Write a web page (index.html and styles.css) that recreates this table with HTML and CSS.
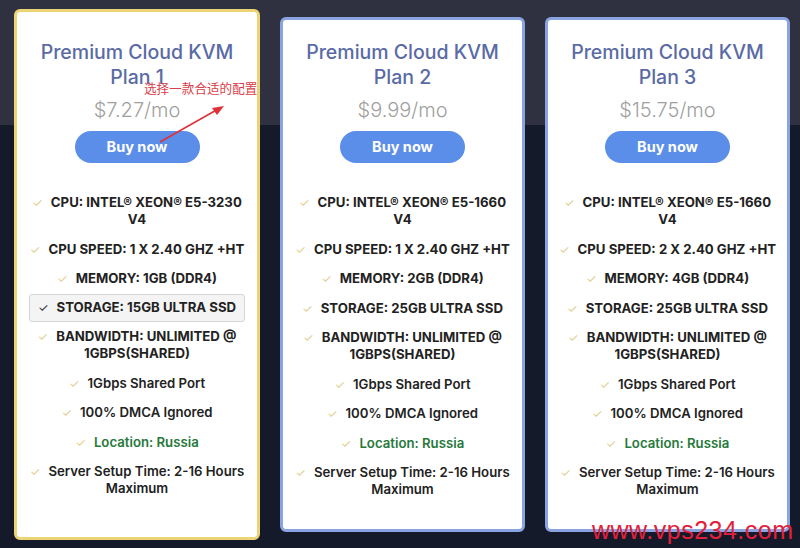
FILE: index.html
```html
<!DOCTYPE html>
<html lang="en">
<head>
<meta charset="utf-8">
<title>Premium Cloud KVM Plans</title>
<link rel="stylesheet" href="styles.css">
</head>
<body>
<main class="plans">
  <section class="card card-active">
    <h2 class="title">Premium Cloud KVM Plan 1</h2>
    <p class="price">$7.27/mo</p>
    <a class="buy" href="#">Buy now</a>
    <ul class="features">
      <li><span class="chk">✓</span>CPU: INTEL® XEON® E5-3230 V4</li>
      <li><span class="chk">✓</span>CPU SPEED: 1 X 2.40 GHZ +HT</li>
      <li><span class="chk">✓</span>MEMORY: 1GB (DDR4)</li>
      <li class="hover"><span class="chk">✓</span>STORAGE: 15GB ULTRA SSD</li>
      <li><span class="chk">✓</span>BANDWIDTH: UNLIMITED @ 1GBPS(SHARED)</li>
      <li class="plain"><span class="chk">✓</span>1Gbps Shared Port</li>
      <li class="plain"><span class="chk">✓</span>100% DMCA Ignored</li>
      <li class="plain loc"><span class="chk">✓</span>Location: Russia</li>
      <li class="plain"><span class="chk">✓</span>Server Setup Time: 2-16 Hours Maximum</li>
    </ul>
  </section>
  <section class="card">
    <h2 class="title">Premium Cloud KVM Plan 2</h2>
    <p class="price">$9.99/mo</p>
    <a class="buy" href="#">Buy now</a>
    <ul class="features">
      <li><span class="chk">✓</span>CPU: INTEL® XEON® E5-1660 V4</li>
      <li><span class="chk">✓</span>CPU SPEED: 1 X 2.40 GHZ +HT</li>
      <li><span class="chk">✓</span>MEMORY: 2GB (DDR4)</li>
      <li><span class="chk">✓</span>STORAGE: 25GB ULTRA SSD</li>
      <li><span class="chk">✓</span>BANDWIDTH: UNLIMITED @ 1GBPS(SHARED)</li>
      <li class="plain"><span class="chk">✓</span>1Gbps Shared Port</li>
      <li class="plain"><span class="chk">✓</span>100% DMCA Ignored</li>
      <li class="plain loc"><span class="chk">✓</span>Location: Russia</li>
      <li class="plain"><span class="chk">✓</span>Server Setup Time: 2-16 Hours Maximum</li>
    </ul>
  </section>
  <section class="card">
    <h2 class="title">Premium Cloud KVM Plan 3</h2>
    <p class="price">$15.75/mo</p>
    <a class="buy" href="#">Buy now</a>
    <ul class="features">
      <li><span class="chk">✓</span>CPU: INTEL® XEON® E5-1660 V4</li>
      <li><span class="chk">✓</span>CPU SPEED: 2 X 2.40 GHZ +HT</li>
      <li><span class="chk">✓</span>MEMORY: 4GB (DDR4)</li>
      <li><span class="chk">✓</span>STORAGE: 25GB ULTRA SSD</li>
      <li><span class="chk">✓</span>BANDWIDTH: UNLIMITED @ 1GBPS(SHARED)</li>
      <li class="plain"><span class="chk">✓</span>1Gbps Shared Port</li>
      <li class="plain"><span class="chk">✓</span>100% DMCA Ignored</li>
      <li class="plain loc"><span class="chk">✓</span>Location: Russia</li>
      <li class="plain"><span class="chk">✓</span>Server Setup Time: 2-16 Hours Maximum</li>
    </ul>
  </section>
</main>
<div class="note">选择一款合适的配置</div>
<svg class="arrow" width="80" height="50" viewBox="0 0 80 50">
  <line x1="8" y1="44" x2="68" y2="10" stroke="#e0303a" stroke-width="1.6"/>
  <polygon points="72,8 60,10 65,17" fill="#e0303a"/>
</svg>
<div class="watermark">www.vps234.com</div>
</body>
</html>
```
FILE: styles.css
```css
html, body {
  margin: 0;
  padding: 0;
}
body {
  width: 800px;
  height: 548px;
  overflow: hidden;
  position: relative;
  background: linear-gradient(#2f3141 0, #2f3141 125px, #141a29 125px, #141a29 100%);
  font-family: Inter, "Noto Sans", sans-serif;
}
.plans {
  display: flex;
  align-items: flex-start;
  gap: 20px;
  padding: 17px 0 0 14px;
}
.card {
  box-sizing: border-box;
  width: 245px;
  background: #fff;
  border: 3px solid #8aa4e2;
  border-radius: 6px;
  padding: 20px 8px 24px;
  text-align: center;
}
.card-active {
  width: 246px;
  border-color: #ecd374;
  margin-top: -8px;
  padding-top: 28px;
  padding-bottom: 33px;
}
.title {
  margin: 0;
  font-size: 19.5px;
  line-height: 25px;
  font-weight: 500;
  color: #5a6aa5;
}
.price {
  margin: 8px 0 0;
  font-size: 20px;
  line-height: 24px;
  font-weight: 300;
  color: #a0a0a0;
}
.buy {
  display: block;
  width: 125px;
  height: 32px;
  line-height: 32px;
  margin: 9px auto 0;
  border-radius: 16px;
  background: #5b8ee9;
  color: #fff;
  font-size: 14.5px;
  font-weight: 700;
  text-decoration: none;
}
.features {
  list-style: none;
  margin: 25px 0 0;
  padding: 0;
}
.features li {
  padding: 6.25px 2px;
  font-size: 13.2px;
  line-height: 17px;
  font-weight: 700;
  color: #222;
}
.features li.plain {
  font-weight: 600;
}
.features li.loc {
  color: #27793c;
}
.chk {
  display: inline-block;
  margin-right: 8px;
  line-height: 1;
  color: #e2cf8f;
  font-size: 12px;
  font-weight: 400;
}
.features li.hover {
  margin: 0 4px;
  padding: 4.75px 0;
  border: 1.5px solid #d6d6d6;
  border-radius: 3px;
  background: #f4f4f4;
}
.features li.hover .chk {
  color: #333;
}
.note {
  position: absolute;
  left: 144px;
  top: 81px;
  font-family: "Noto Sans CJK SC", sans-serif;
  font-size: 12.6px;
  line-height: 14px;
  color: #d8404a;
}
.arrow {
  position: absolute;
  left: 152px;
  top: 98px;
}
.watermark {
  position: absolute;
  left: 592px;
  top: 515px;
  font-family: "Liberation Sans", Arial, sans-serif;
  font-size: 25px;
  line-height: 30px;
  color: #e3203c;
  letter-spacing: 0.5px;
}
```
